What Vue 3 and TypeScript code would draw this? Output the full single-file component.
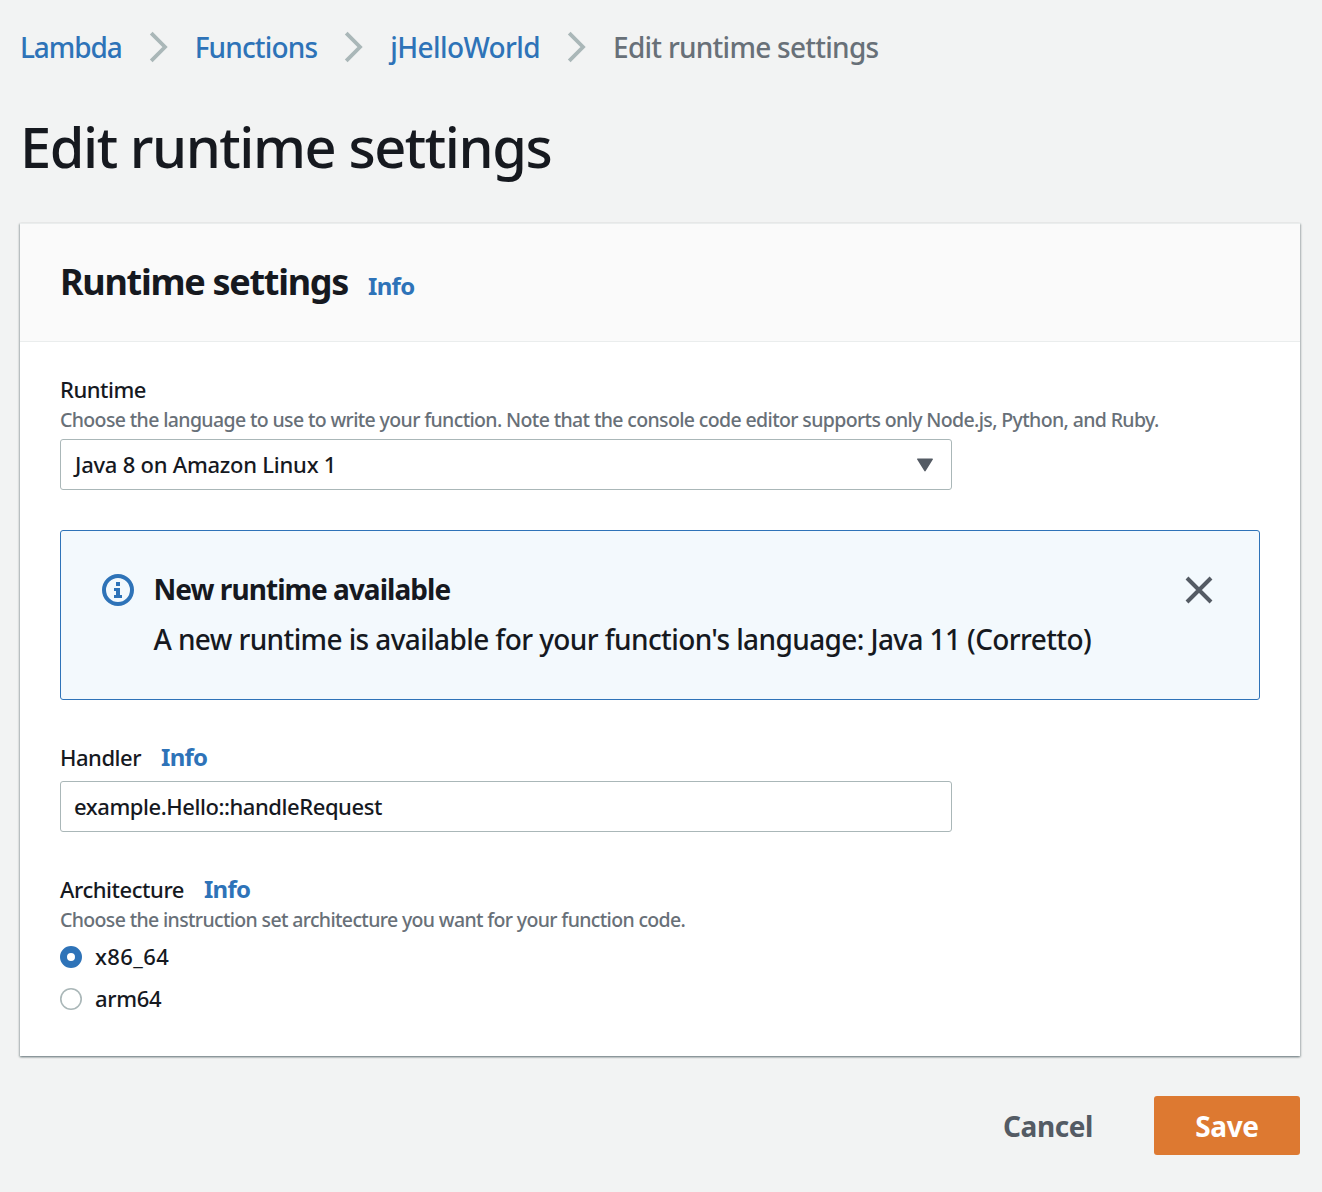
<script setup lang="ts">
import { ref } from 'vue'

const crumbs = [
  { label: 'Lambda', track: -1.1 },
  { label: 'Functions', track: -0.85 },
  { label: 'jHelloWorld', track: -0.6 },
]
const runtime = ref('Java 8 on Amazon Linux 1')
const handler = ref('example.Hello::handleRequest')
const architectures = ['x86_64', 'arm64']
const selected = ref('x86_64')
</script>

<template>
  <main class="page">
    <nav class="breadcrumbs">
      <template v-for="c in crumbs" :key="c.label">
        <a :style="{ letterSpacing: c.track + 'px' }">{{ c.label }}</a>
        <svg class="chevron" width="20" height="32" viewBox="0 0 20 32"><path d="M2.2 2.2 16 16 2.2 29.8" /></svg>
      </template>
      <span class="current">Edit runtime settings</span>
    </nav>

    <h1>Edit runtime settings</h1>

    <section class="card">
      <header class="card-header">
        <h2>Runtime settings</h2>
        <a class="info">Info</a>
      </header>
      <div class="card-body">
        <div class="label runtime"><span>Runtime</span></div>
        <p class="hint">Choose the language to use to write your function. Note that the console code editor supports only Node.js, Python, and Ruby.</p>
        <div class="field select">
          <span>{{ runtime }}</span>
          <svg width="18" height="16" viewBox="0 0 18 16"><path d="M1.8 2.2h14.4L9 13.6z" /></svg>
        </div>

        <div class="alert">
          <svg class="alert-icon" width="32" height="32" viewBox="0 0 32 32">
            <circle cx="16" cy="16" r="14" />
            <path d="M14 8h4v4h-4zM12 14h6v7h2v3h-8v-3h2v-4h-2z" />
          </svg>
          <div class="alert-text">
            <strong>New runtime available</strong>
            <p>A new runtime is available for your function's language: Java 11 (Corretto)</p>
          </div>
          <svg class="close" width="28" height="28" viewBox="0 0 28 28"><path d="M2 2 26 26M26 2 2 26" /></svg>
        </div>

        <div class="label"><span>Handler</span><a class="info">Info</a></div>
        <div class="field handler"><span>{{ handler }}</span></div>

        <div class="label arch"><span>Architecture</span><a class="info">Info</a></div>
        <p class="hint arch-hint">Choose the instruction set architecture you want for your function code.</p>
        <div class="radios">
          <div v-for="a in architectures" :key="a" class="radio" @click="selected = a">
            <i :class="{ on: selected === a }"></i><span :class="a">{{ a }}</span>
          </div>
        </div>
      </div>
    </section>

    <footer class="actions">
      <button class="cancel">Cancel</button>
      <button class="save">Save</button>
    </footer>
  </main>
</template>

<style>
body { margin: 0; background: #f2f3f3; }
</style>

<style scoped>
.page {
  box-sizing: border-box;
  width: 1322px;
  height: 1192px;
  padding: 25px 22px 0 20px;
  overflow: hidden;
  background: #f2f3f3;
  color: #16191f;
  font-family: "Noto Sans", "Open Sans", sans-serif;
  font-weight: 500;
}
h1, h2, p { margin: 0; }
a { color: #2e73b8; }
.breadcrumbs { display: flex; align-items: center; height: 44px; font-size: 28px; line-height: 44px; white-space: nowrap; }
.chevron { flex: none; margin: 0 26px 0 27px; fill: none; stroke: #aab7b8; stroke-width: 3.8; }
.current { color: #687078; letter-spacing: -0.74px; }
h1 { margin-top: 41px; font-size: 56px; line-height: 72px; font-weight: 500; letter-spacing: -1.45px; }
.card {
  width: 1280px;
  height: 833px;
  margin-top: 41px;
  background: #fff;
  box-shadow: 0 1px 2px rgba(0, 28, 36, 0.36), 1px 1px 2px rgba(0, 28, 36, 0.18), -1px 1px 2px rgba(0, 28, 36, 0.18);
}
.card-header {
  display: flex;
  align-items: baseline;
  box-sizing: border-box;
  height: 119px;
  padding: 36px 40px 0;
  background: #fafafa;
  border-top: 1px solid #eaeded;
  border-bottom: 1px solid #eaeded;
}
h2 { font-size: 36px; line-height: 44px; font-weight: 700; letter-spacing: -1.28px; }
.info { margin-left: 20px; font-size: 24px; line-height: 30px; font-weight: 700; letter-spacing: -0.7px; }
.card-body { padding: 32px 40px 0; }
.label { display: flex; align-items: baseline; height: 30px; font-size: 22px; line-height: 30px; letter-spacing: -0.48px; }
.hint { margin-top: 1px; font-size: 19.5px; line-height: 30px; letter-spacing: -0.635px; color: #687078; white-space: nowrap; }
.arch-hint { letter-spacing: -0.65px; }
.field {
  display: flex;
  align-items: center;
  justify-content: space-between;
  box-sizing: border-box;
  width: 892px;
  height: 51px;
  padding: 0 17px 0 14px;
  border: 1px solid #aab7b8;
  border-radius: 3px;
  background: #fff;
  font-size: 22px;
  line-height: 30px;
  letter-spacing: -0.24px;
}
.field span { margin-bottom: 2px; }
.select { margin-top: 4px; }
.select svg { fill: #545b64; stroke: #545b64; stroke-width: 1.5; stroke-linejoin: round; }
.handler { margin-top: 9px; padding-left: 13px; letter-spacing: -0.44px; }
.alert {
  display: flex;
  align-items: flex-start;
  box-sizing: border-box;
  height: 170px;
  margin: 40px 0 42px;
  padding: 0 46px 0 41px;
  border: 1px solid #2e73b8;
  border-radius: 3px;
  background: #f3f9fd;
}
.alert-icon { margin-top: 43px; fill: #2e73b8; }
.alert-icon circle { fill: none; stroke: #2e73b8; stroke-width: 4; }
.alert-text { flex: 1; margin: 33px 0 0 19.5px; font-size: 28px; line-height: 50px; white-space: nowrap; }
.alert-text strong { display: block; font-weight: 700; letter-spacing: -0.95px; }
.alert-text p { letter-spacing: -0.61px; }
.close { margin-top: 45px; fill: none; stroke: #545b64; stroke-width: 4; }
.arch { margin-top: 42px; letter-spacing: -0.45px; }
.radios { display: flex; flex-direction: column; gap: 12px; margin-top: 7px; }
.radio { display: flex; align-items: center; height: 30px; font-size: 22px; line-height: 30px; }
.radio span { margin-bottom: 2px; }
.radio i { box-sizing: border-box; width: 22px; height: 22px; margin-right: 13px; border-radius: 50%; background: #fff; box-shadow: inset 0 0 0 1.6px #aab7b8; }
.radio i.on { border: 7px solid #2e73b8; box-shadow: none; }
.x86_64 { letter-spacing: 0.4px; }
.arm64 { letter-spacing: -0.3px; }
.actions { display: flex; justify-content: flex-end; margin-top: 40px; }
.actions button { height: 59px; padding: 2px 0 0; border: 0; border-radius: 3px; background: none; font: 700 28px/57px "Noto Sans", "Open Sans", sans-serif; letter-spacing: -0.4px; }
.actions .cancel { margin-right: 61px; color: #545b64; }
.actions .save { width: 146px; background: #dd7931; color: #fff; }
</style>
